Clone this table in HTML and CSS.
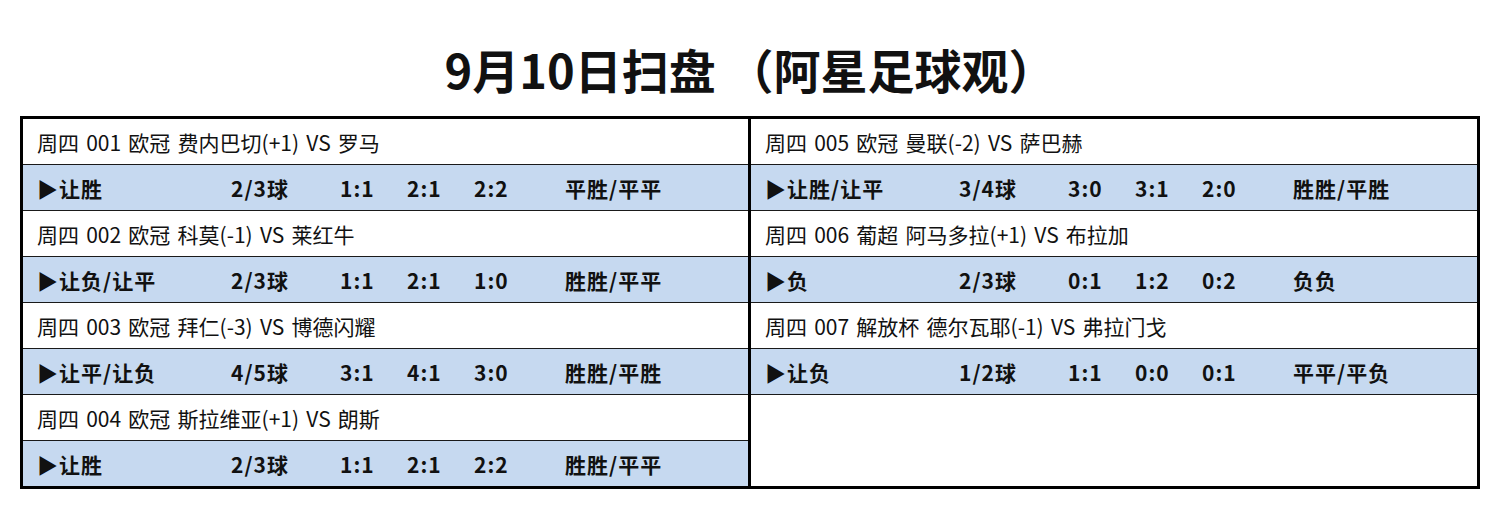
FILE: index.html
```html
<!DOCTYPE html>
<html lang="zh">
<head>
<meta charset="utf-8">
<link rel="stylesheet" href="styles.css">
</head>
<body>
<div class="page">
  <h1 class="title">9月10日扫盘 （阿星足球观）</h1>
  <div class="board">
    <div class="col col-left">
      <div class="row info">周四 001 欧冠 费内巴切(+1) VS 罗马</div>
      <div class="row pick"><span>▶让胜</span><span>2/3球</span><span>1:1</span><span>2:1</span><span>2:2</span><span>平胜/平平</span></div>
      <div class="row info">周四 002 欧冠 科莫(-1) VS 莱红牛</div>
      <div class="row pick"><span>▶让负/让平</span><span>2/3球</span><span>1:1</span><span>2:1</span><span>1:0</span><span>胜胜/平平</span></div>
      <div class="row info">周四 003 欧冠 拜仁(-3) VS 博德闪耀</div>
      <div class="row pick"><span>▶让平/让负</span><span>4/5球</span><span>3:1</span><span>4:1</span><span>3:0</span><span>胜胜/平胜</span></div>
      <div class="row info">周四 004 欧冠 斯拉维亚(+1) VS 朗斯</div>
      <div class="row pick"><span>▶让胜</span><span>2/3球</span><span>1:1</span><span>2:1</span><span>2:2</span><span>胜胜/平平</span></div>
    </div>
    <div class="col col-right">
      <div class="row info">周四 005 欧冠 曼联(-2) VS 萨巴赫</div>
      <div class="row pick"><span>▶让胜/让平</span><span>3/4球</span><span>3:0</span><span>3:1</span><span>2:0</span><span>胜胜/平胜</span></div>
      <div class="row info">周四 006 葡超 阿马多拉(+1) VS 布拉加</div>
      <div class="row pick"><span>▶负</span><span>2/3球</span><span>0:1</span><span>1:2</span><span>0:2</span><span>负负</span></div>
      <div class="row info">周四 007 解放杯 德尔瓦耶(-1) VS 弗拉门戈</div>
      <div class="row pick"><span>▶让负</span><span>1/2球</span><span>1:1</span><span>0:0</span><span>0:1</span><span>平平/平负</span></div>
    </div>
  </div>
</div>
</body>
</html>
```
FILE: styles.css
```css
html, body {
  margin: 0;
  padding: 0;
  background: #ffffff;
}
body {
  font-family: "Noto Sans CJK SC", "Noto Sans", sans-serif;
  color: #111;
}
.page {
  width: 1500px;
  height: 515px;
}
.title {
  margin: 0;
  height: 116px;
  box-sizing: border-box;
  padding-top: 38px;
  text-align: center;
  font-size: 47px;
  font-weight: 700;
  line-height: 62px;
}
.board {
  margin-left: 20px;
  width: 1460px;
  box-sizing: border-box;
  border: 3px solid #000;
  display: grid;
  grid-template-columns: 728px 1fr;
  height: 373px;
}
.col-left {
  border-right: 3px solid #000;
}
.row {
  height: 45px;
  border-bottom: 1px solid #1a1a1a;
  display: flex;
  align-items: center;
  font-size: 21px;
  white-space: nowrap;
}
.col-left .row:last-child {
  border-bottom: none;
}
.info {
  padding-left: 14px;
  background: #fff;
  word-spacing: 2.5px;
}
.pick {
  display: grid;
  grid-template-columns: 194px 109px 67px 67px 91px 1fr;
  align-items: center;
  padding-left: 14px;
  background: #c6d9f0;
  font-weight: 700;
  letter-spacing: 1px;
}
.col-right .row {
  padding-left: 14px;
}
```
